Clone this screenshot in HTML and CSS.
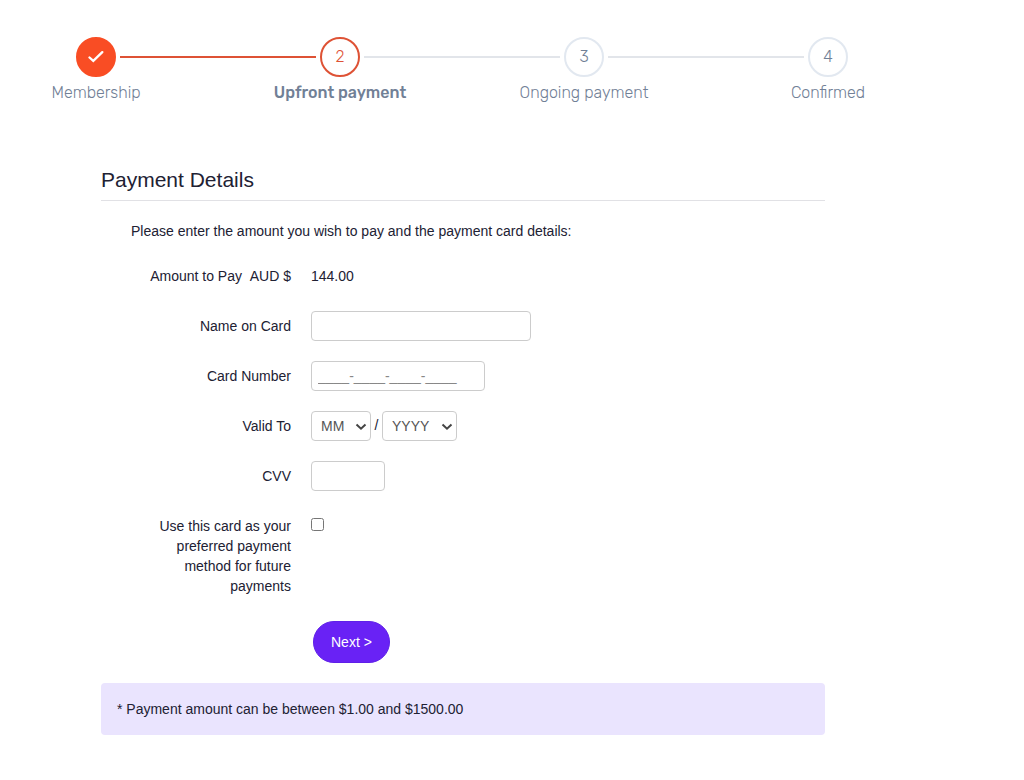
FILE: index.html
```html
<!DOCTYPE html>
<html lang="en">
<head>
<meta charset="utf-8">
<meta name="viewport" content="width=device-width, initial-scale=1">
<title>Upfront payment</title>
<link rel="stylesheet" href="styles.css">
</head>
<body>
<ol class="steps">
  <li class="step step-done">
    <span class="step-circle">
      <svg class="step-check" viewBox="0 0 16 16" aria-hidden="true"><path d="M1.5 8.5 5.3 11.9 14.3 3.1"/></svg>
    </span>
    <span class="step-label">Membership</span>
  </li>
  <li class="step step-current" aria-current="step">
    <span class="step-circle">2</span>
    <span class="step-label">Upfront payment</span>
  </li>
  <li class="step">
    <span class="step-circle">3</span>
    <span class="step-label">Ongoing payment</span>
  </li>
  <li class="step">
    <span class="step-circle">4</span>
    <span class="step-label">Confirmed</span>
  </li>
</ol>
<main class="payment">
  <h1 class="title">Payment Details</h1>
  <form class="form">
    <p class="intro">Please enter the amount you wish to pay and the payment card details:</p>
    <div class="row">
      <span class="row-label">Amount to Pay &nbsp;AUD $</span>
      <span class="amount">144.00</span>
    </div>
    <div class="row">
      <label class="row-label" for="name">Name on Card</label>
      <input class="field field-name" id="name" type="text">
    </div>
    <div class="row">
      <label class="row-label" for="number">Card Number</label>
      <input class="field field-number" id="number" type="text" placeholder="____-____-____-____">
    </div>
    <div class="row">
      <label class="row-label" for="month">Valid To</label>
      <div class="expiry">
        <span class="select select-month">
          <select class="field" id="month"><option>MM</option></select>
          <svg class="arrow" viewBox="0 0 12 8" aria-hidden="true"><path d="M1.5 1.5 6 5.7 10.5 1.5"/></svg>
        </span>
        <span>/</span>
        <span class="select select-year">
          <select class="field" id="year" aria-label="Valid to year"><option>YYYY</option></select>
          <svg class="arrow" viewBox="0 0 12 8" aria-hidden="true"><path d="M1.5 1.5 6 5.7 10.5 1.5"/></svg>
        </span>
      </div>
    </div>
    <div class="row">
      <label class="row-label" for="cvv">CVV</label>
      <input class="field field-cvv" id="cvv" type="text">
    </div>
    <div class="row">
      <label class="row-label" for="preferred">Use this card as your preferred payment method for future payments</label>
      <input class="checkbox" id="preferred" type="checkbox">
    </div>
    <button class="next" type="button">Next &gt;</button>
  </form>
  <p class="note">* Payment amount can be between $1.00 and $1500.00</p>
</main>
</body>
</html>
```
FILE: styles.css
```css
* {
  box-sizing: border-box;
}

body {
  margin: 0;
  background: #fff;
  color: #212133;
  font: 14px/20px "Liberation Sans", Arial, sans-serif;
}

.steps {
  display: flex;
  max-width: 772px;
  margin: 37px 76px 0;
  padding: 0;
  list-style: none;
  color: #718096;
  font-family: Rubik, Roboto, sans-serif;
  font-size: 16px;
  font-weight: 300;
}

.step {
  display: grid;
  grid-template-columns: 40px 1fr;
  row-gap: 6px;
  flex: 1;
}

.step:last-child {
  grid-template-columns: 40px;
  flex: none;
}

.step:not(:last-child)::after {
  content: "";
  grid-area: 1 / 2;
  align-self: center;
  height: 2px;
  margin: 0 4px;
  background: #e2e5ea;
}

.step-circle {
  grid-area: 1 / 1;
  display: flex;
  align-items: center;
  justify-content: center;
  height: 40px;
  border: 2px solid #e2e8f0;
  border-radius: 50%;
}

.step-label {
  grid-area: 2 / 1;
  justify-self: center;
  white-space: nowrap;
}

.step-done .step-circle {
  border-color: #f94d24;
  background: #f94d24;
}

.step.step-done::after {
  background: #de5235;
}

.step-current .step-circle {
  border-color: #de5235;
  color: #de5235;
}

.step-current .step-label {
  font-weight: 500;
}

.step-check {
  width: 16px;
  height: 16px;
  fill: none;
  stroke: #fff;
  stroke-width: 2.3;
  stroke-linecap: round;
}

.payment {
  max-width: 724px;
  margin: 67px 101px 0;
}

.title {
  margin: 0 0 20px;
  padding-bottom: 10px;
  border-bottom: 1px solid #e1e1e5;
  font-size: 21px;
  font-weight: 400;
  line-height: 20px;
}

.form {
  display: flex;
  flex-direction: column;
  gap: 20px;
  padding-left: 30px;
}

.intro {
  margin: 0;
}

.row {
  display: grid;
  grid-template-columns: 160px 1fr;
  column-gap: 20px;
  min-height: 30px;
  align-items: start;
}

.row-label,
.amount {
  padding-top: 5px;
}

.row-label {
  text-align: right;
}

.field {
  height: 30px;
  padding: 4px 6px;
  border: 1px solid #ccc;
  border-radius: 4px;
  background: #fff;
  color: #555;
  font: inherit;
}

.field::placeholder {
  color: #888;
}

.field-name {
  width: 220px;
}

.field-number {
  width: 174px;
}

.field-cvv {
  width: 74px;
}

.expiry {
  display: flex;
  justify-content: space-between;
  width: 146px;
  line-height: 28px;
}

.select {
  position: relative;
}

.select .field {
  display: block;
  width: 100%;
  padding: 4px 9px;
  appearance: none;
  line-height: 20px;
}

.select-month {
  width: 60px;
}

.select-year {
  width: 75px;
}

.arrow {
  position: absolute;
  top: 12px;
  right: 4px;
  width: 12px;
  height: 8px;
  fill: none;
  stroke: #444;
  stroke-width: 2;
  pointer-events: none;
}

.checkbox {
  width: 13px;
  height: 13px;
  margin: 7px 0 0;
}

.next {
  align-self: flex-start;
  height: 42px;
  margin: 5px 0 0 182px;
  padding: 0 17px;
  border: 1px solid #5f20e8;
  border-radius: 21px;
  background: #6922f5;
  color: #fff;
  font: inherit;
}

.note {
  margin: 20px 0;
  padding: 16px;
  border-radius: 4px;
  background: #eae4fe;
}
```
